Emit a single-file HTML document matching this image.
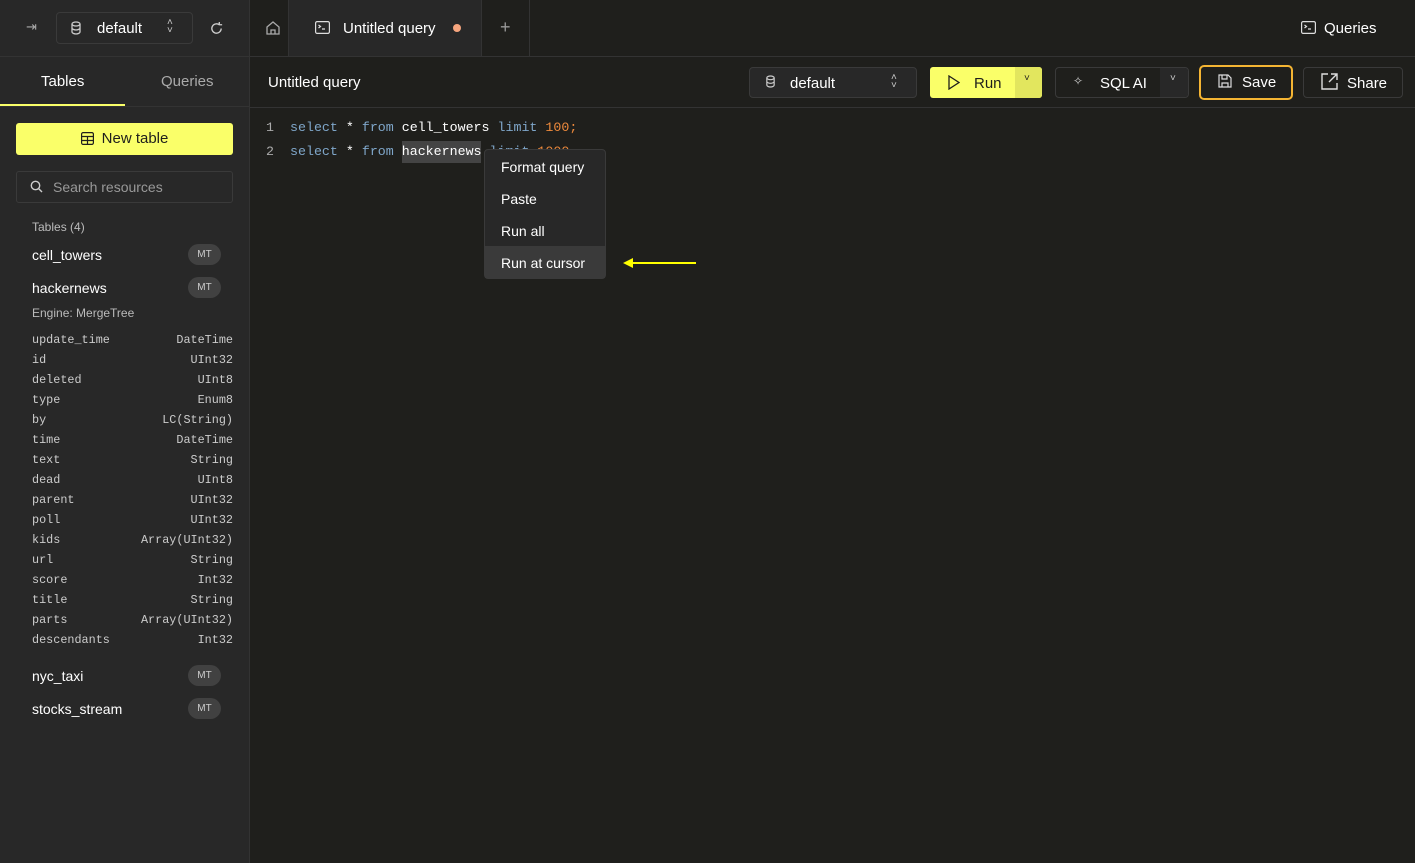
<!DOCTYPE html><html><head><style>
*{box-sizing:border-box;margin:0;padding:0}
body{width:1415px;height:863px;background:#1f1f1c;font-family:"Liberation Sans",sans-serif;color:#fff;position:relative;overflow:hidden}
.a{position:absolute}
.mono{font-family:"Liberation Mono",monospace}
.side{left:0;top:0;width:250px;height:863px;background:#282828;border-right:1px solid #333}
.badge{position:absolute;left:188px;width:33px;height:21px;border-radius:11px;background:#414141;color:#ccc;font-size:10px;text-align:center;line-height:21px}
.col{position:absolute;left:32px;width:201px;font-size:11.8px;color:#ccc;display:flex;justify-content:space-between}
.btn{position:absolute;border:1px solid #3a3a3a;border-radius:4px;background:#1f1f1c;font-size:14px}
</style></head><body>
<div class="a side"></div>
<div class="a" style="left:0;top:56px;width:1415px;height:1px;background:#333"></div>
<div class="a" style="left:249px;top:0;width:1px;height:56px;background:#333"></div>
<div class="a" style="left:26px;top:19px;color:#aaa;font-size:13px">⇥</div>
<div class="a" style="left:56px;top:12px;width:137px;height:32px;border:1px solid #3a3a3a;border-radius:4px;background:#282828"></div>
<svg class="a" style="left:70px;top:21px" width="12" height="14" viewBox="0 0 12 14" fill="none" stroke="#ccc" stroke-width="1.3"><ellipse cx="6" cy="3" rx="4" ry="2"/><path d="M2 3v8c0 1 2 2 4 2s4-1 4-2V3M2 7c0 1 2 2 4 2s4-1 4-2"/></svg>
<div class="a" style="left:97px;top:20px;font-size:15px">default</div>
<div class="a" style="left:167px;top:19px;font-size:10px;color:#ccc;line-height:8px">˄<br>˅</div>
<svg class="a" style="left:209px;top:21px" width="15" height="15" viewBox="0 0 16 16" fill="none" stroke="#ccc" stroke-width="1.4"><path d="M13 8a5 5 0 1 1-2-4M11 1v3h3"/></svg>
<svg class="a" style="left:265px;top:20px" width="16" height="16" viewBox="0 0 16 16" fill="none" stroke="#aaa" stroke-width="1.3"><path d="M2 7l6-5 6 5v7H2zM6 14v-4h4v4"/></svg>
<div class="a" style="left:288px;top:0;width:1px;height:56px;background:#333"></div>
<div class="a" style="left:289px;top:0;width:192px;height:56px;background:#282828"></div>
<svg class="a" style="left:315px;top:21px" width="15" height="13" viewBox="0 0 15 13" fill="none" stroke="#ddd" stroke-width="1.2"><rect x=".6" y=".6" width="13.8" height="11.8" rx="1.5"/><path d="M3.5 4l2 1.5-2 1.5M7 8h3"/></svg>
<div class="a" style="left:343px;top:20px;font-size:15px">Untitled query</div>
<div class="a" style="left:453px;top:24px;width:8px;height:8px;border-radius:50%;background:#f6a57e"></div>
<div class="a" style="left:481px;top:0;width:1px;height:56px;background:#333"></div>
<div class="a" style="left:500px;top:17px;font-size:18px;color:#999">+</div>
<div class="a" style="left:529px;top:0;width:1px;height:56px;background:#333"></div>
<svg class="a" style="left:1301px;top:21px" width="15" height="13" viewBox="0 0 15 13" fill="none" stroke="#ddd" stroke-width="1.2"><rect x=".6" y=".6" width="13.8" height="11.8" rx="1.5"/><path d="M3.5 4l2 1.5-2 1.5M7 8h3"/></svg>
<div class="a" style="left:1324px;top:20px;font-size:15px">Queries</div>
<div class="a" style="left:41px;top:73px;font-size:15px">Tables</div>
<div class="a" style="left:161px;top:73px;font-size:15px;color:#aaa">Queries</div>
<div class="a" style="left:0;top:104px;width:125px;height:2px;background:#faff69"></div>
<div class="a" style="left:0;top:106px;width:249px;height:1px;background:#333"></div>
<div class="a" style="left:16px;top:123px;width:217px;height:32px;background:#faff69;border-radius:3px;color:#1f1f1c;font-size:15px;text-align:center;line-height:32px">
<svg style="vertical-align:-2px;margin-right:8px" width="13" height="13" viewBox="0 0 13 13" fill="none" stroke="#1f1f1c" stroke-width="1.2"><rect x=".6" y=".6" width="11.8" height="11.8" rx="1.5"/><path d="M.6 4.5h11.8M.6 8.5h11.8M6.5 4.5v8"/></svg>New table</div>
<div class="a" style="left:16px;top:171px;width:217px;height:32px;border:1px solid #3a3a3a;border-radius:3px;background:#282828"></div>
<svg class="a" style="left:30px;top:180px" width="13" height="13" viewBox="0 0 13 13" fill="none" stroke="#ccc" stroke-width="1.4"><circle cx="5.5" cy="5.5" r="4.2"/><path d="M8.5 8.5l3.5 3.5"/></svg>
<div class="a" style="left:53px;top:179px;font-size:14px;color:#999">Search resources</div>
<div class="a" style="left:32px;top:220px;font-size:12px;color:#bbb">Tables (4)</div>
<div class="a" style="left:32px;top:247px;font-size:14px">cell_towers</div><div class="badge" style="top:244px">MT</div>
<div class="a" style="left:32px;top:280px;font-size:14px">hackernews</div><div class="badge" style="top:277px">MT</div>
<div class="a" style="left:32px;top:306px;font-size:12px;color:#bbb">Engine: MergeTree</div>
<div class="col mono" style="top:333px"><span>update_time</span><span>DateTime</span></div>
<div class="col mono" style="top:353px"><span>id</span><span>UInt32</span></div>
<div class="col mono" style="top:373px"><span>deleted</span><span>UInt8</span></div>
<div class="col mono" style="top:393px"><span>type</span><span>Enum8</span></div>
<div class="col mono" style="top:413px"><span>by</span><span>LC(String)</span></div>
<div class="col mono" style="top:433px"><span>time</span><span>DateTime</span></div>
<div class="col mono" style="top:453px"><span>text</span><span>String</span></div>
<div class="col mono" style="top:473px"><span>dead</span><span>UInt8</span></div>
<div class="col mono" style="top:493px"><span>parent</span><span>UInt32</span></div>
<div class="col mono" style="top:513px"><span>poll</span><span>UInt32</span></div>
<div class="col mono" style="top:533px"><span>kids</span><span>Array(UInt32)</span></div>
<div class="col mono" style="top:553px"><span>url</span><span>String</span></div>
<div class="col mono" style="top:573px"><span>score</span><span>Int32</span></div>
<div class="col mono" style="top:593px"><span>title</span><span>String</span></div>
<div class="col mono" style="top:613px"><span>parts</span><span>Array(UInt32)</span></div>
<div class="col mono" style="top:633px"><span>descendants</span><span>Int32</span></div>
<div class="a" style="left:32px;top:668px;font-size:14px">nyc_taxi</div><div class="badge" style="top:665px">MT</div>
<div class="a" style="left:32px;top:701px;font-size:14px">stocks_stream</div><div class="badge" style="top:698px">MT</div>
<div class="a" style="left:268px;top:74px;font-size:15px">Untitled query</div>
<div class="a" style="left:250px;top:107px;width:1165px;height:1px;background:#333"></div>
<div class="btn" style="left:749px;top:67px;width:168px;height:31px;background:#282828"></div>
<svg class="a" style="left:765px;top:75px" width="11" height="13" viewBox="0 0 12 14" fill="none" stroke="#ccc" stroke-width="1.3"><ellipse cx="6" cy="3" rx="4" ry="2"/><path d="M2 3v8c0 1 2 2 4 2s4-1 4-2V3M2 7c0 1 2 2 4 2s4-1 4-2"/></svg>
<div class="a" style="left:790px;top:75px;font-size:15px">default</div>
<div class="a" style="left:891px;top:74px;font-size:10px;color:#ccc;line-height:8px">˄<br>˅</div>
<div class="a" style="left:930px;top:67px;width:112px;height:31px;background:#faff69;border-radius:3px"></div>
<div class="a" style="left:1015px;top:67px;width:27px;height:31px;background:#e2e65e;border-radius:0 3px 3px 0"></div>
<svg class="a" style="left:948px;top:75px" width="12" height="15" viewBox="0 0 12 15" fill="none" stroke="#1f1f1c" stroke-width="1.3"><path d="M1 1l10 6.5L1 14z"/></svg>
<div class="a" style="left:974px;top:75px;font-size:15px;color:#1f1f1c">Run</div>
<div class="a" style="left:1024px;top:73px;font-size:10px;color:#1f1f1c">˅</div>
<div class="btn" style="left:1055px;top:67px;width:134px;height:31px"></div>
<div class="a" style="left:1160px;top:68px;width:28px;height:29px;background:#282828;border-radius:0 3px 3px 0"></div>
<div class="a" style="left:1073px;top:74px;font-size:12px;color:#ccc">✧</div>
<div class="a" style="left:1100px;top:75px;font-size:15px">SQL AI</div>
<div class="a" style="left:1170px;top:73px;font-size:10px;color:#ccc">˅</div>
<div class="a" style="left:1199px;top:65px;width:94px;height:35px;border:2px solid #f5b533;border-radius:5px"></div>
<svg class="a" style="left:1218px;top:74px" width="14" height="14" viewBox="0 0 14 14" fill="none" stroke="#ddd" stroke-width="1.2"><path d="M1 1h9l3 3v9H1z M4 1v4h5V1 M4 13V9h6v4"/></svg>
<div class="a" style="left:1242px;top:74px;font-size:15px">Save</div>
<div class="btn" style="left:1303px;top:67px;width:100px;height:31px"></div>
<svg class="a" style="left:1321px;top:73px" width="17" height="17" viewBox="0 0 17 17" fill="none" stroke="#ddd" stroke-width="1.4"><path d="M7 1H1v15h15v-6M10 1h6v6M16 1L8 9"/></svg>
<div class="a" style="left:1347px;top:75px;font-size:15px">Share</div>
<div class="a mono" style="left:266px;top:116px;font-size:13.3px;color:#aaa;line-height:24px">1<br>2</div>
<div class="a" style="left:402px;top:141px;width:79px;height:22px;background:#444"></div>
<div class="a mono" style="left:290px;top:116px;font-size:13.3px;line-height:24px;white-space:pre"><span style="color:#7fa6c9">select</span> * <span style="color:#7fa6c9">from</span> cell_towers <span style="color:#7fa6c9">limit</span> <span style="color:#ef8a3c">100;</span>
<span style="color:#7fa6c9">select</span> * <span style="color:#7fa6c9">from</span> hackernews <span style="color:#7fa6c9">limit</span> <span style="color:#ef8a3c">1000</span></div>
<div class="a" style="left:484px;top:149px;width:122px;height:130px;background:#282828;border:1px solid #3a3a3a;border-radius:4px;font-size:14px">
<div style="position:absolute;left:0;top:96px;width:120px;height:32px;background:#3a3a3a"></div>
<div style="position:absolute;left:16px;top:9px">Format query</div>
<div style="position:absolute;left:16px;top:41px">Paste</div>
<div style="position:absolute;left:16px;top:73px">Run all</div>
<div style="position:absolute;left:16px;top:105px">Run at cursor</div></div>
<div class="a" style="left:630px;top:262px;width:66px;height:2px;background:#ffff00"></div>
<div class="a" style="left:623px;top:258px;width:0;height:0;border-top:5px solid transparent;border-bottom:5px solid transparent;border-right:10px solid #ffff00"></div>
</body></html>
